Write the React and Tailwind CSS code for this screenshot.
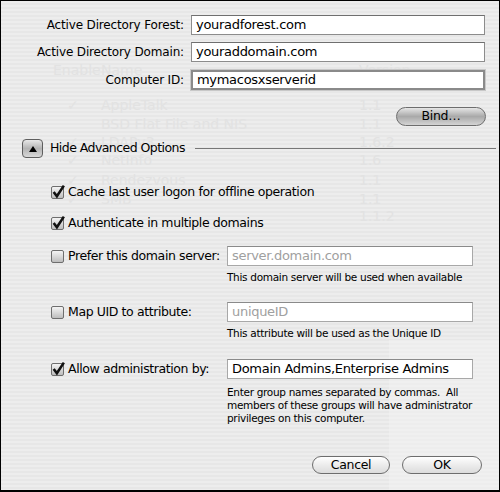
import React from 'react';

const font = { fontFamily: '"DejaVu Sans", "Liberation Sans", sans-serif' };

const ghostRows = [
  { name: 'AppleTalk', ver: '1.1', y: 'top-[94px]', on: true },
  { name: 'BSD Flat File and NIS', ver: '1.1', y: 'top-[113px]', on: false },
  { name: 'LDAPv3', ver: '1.6.2', y: 'top-[131px]', on: true },
  { name: 'NetInfo', ver: '1.6', y: 'top-[149px]', on: true },
  { name: 'Rendezvous', ver: '1.1', y: 'top-[169px]', on: true },
  { name: 'SMB', ver: '1.1', y: 'top-[188px]', on: true },
  { name: '', ver: '1.1.2', y: 'top-[205px]', on: false },
];

// faded list from the pane behind the sheet
const Ghost = () => (
  <div className="absolute inset-0 pointer-events-none text-[14px] text-[#e2e2e2]">
    <div className="absolute left-[52px] top-[59px]">Enable</div>
    <div className="absolute left-[100px] top-[59px]">Name</div>
    <div className="absolute left-[358px] top-[59px]">Version</div>
    {ghostRows.map((r, i) => (
      <React.Fragment key={i}>
        {r.on && <div className={`absolute left-[66px] ${r.y}`}>✓</div>}
        <div className={`absolute left-[100px] ${r.y}`}>{r.name}</div>
        <div className={`absolute left-[358px] ${r.y}`}>{r.ver}</div>
      </React.Fragment>
    ))}
  </div>
);

const TextRow = ({ label, value, focused }) => (
  <div className="flex items-center h-[20px]">
    <div className="w-[183px] text-right text-[12px] tracking-[-0.15px] text-black whitespace-nowrap">{label}</div>
    <div
      className={`ml-[7px] w-[294px] h-[20px] bg-white flex items-center pl-[4px] text-[13px] tracking-[-0.3px] text-black ${
        focused
          ? 'border-2 border-[#8a8a8a] shadow-[0_0_0_1px_#c8c8c8]'
          : 'border border-[#8c8c8c] border-t-[#6f6f6f]'
      }`}
    >
      {value}
    </div>
  </div>
);

const Check = ({ checked }) => (
  <span className="w-[13px] h-[13px] rounded-[2px] border border-[#6e6e6e] bg-gradient-to-b from-[#f4f4f4] via-[#d9d9d9] to-[#bdbdbd] relative shrink-0">
    {checked && (
      <svg viewBox="0 0 14 14" className="absolute -left-[1px] -top-[3px] w-[15px] h-[15px]">
        <path d="M2.5 7.5 L5.5 11.5 L12 1.5" fill="none" stroke="#111" strokeWidth="2.4" />
      </svg>
    )}
  </span>
);

const Field = ({ value, placeholder }) => (
  <div className="w-[246px] h-[20px] bg-white border border-[#a8a8a8] border-t-[#8a8a8a] flex items-center pl-[4px] text-[13px] tracking-[-0.3px]">
    {value ? <span className="text-black">{value}</span> : <span className="text-[#a0a0a0]">{placeholder}</span>}
  </div>
);

const Pill = ({ children, dark, className }) => (
  <div
    className={`h-[18px] rounded-full border border-[#6d6d6d] flex items-center justify-center text-[12.5px] tracking-[-0.3px] text-black ${
      dark
        ? 'bg-gradient-to-b from-[#e6e6e6] via-[#a9a9a9] to-[#d4d4d4]'
        : 'bg-gradient-to-b from-[#ffffff] via-[#ececec] to-[#dcdcdc]'
    } ${className}`}
  >
    {children}
  </div>
);

const Hint = ({ children, className }) => (
  <div className={`pl-[176px] text-[10.5px] tracking-[-0.3px] leading-[13px] ${className}`}>{children}</div>
);

export default function App() {
  return (
    <div style={font} className="w-[500px] h-[492px] relative border border-b-2 border-black overflow-hidden bg-[repeating-linear-gradient(to_bottom,#ededed_0px,#ededed_2px,#e7e7e7_2px,#e7e7e7_4px)]">
      <div className="absolute right-0 bottom-0 w-[110px] h-[150px] bg-[#f3f3f3]/50 pointer-events-none" />
      <Ghost />
      <div className="relative">
        <div className="pt-[14px] flex flex-col gap-[7px]">
          <TextRow label="Active Directory Forest:" value="youradforest.com" />
          <TextRow label="Active Directory Domain:" value="youraddomain.com" />
          <div className="mt-[1px]">
            <TextRow label="Computer ID:" value="mymacosxserverid" focused />
          </div>
        </div>

        <div className="flex justify-end pr-[13px] mt-[17px]">
          <Pill dark className="w-[90px] h-[19px]">Bind…</Pill>
        </div>

        <div className="flex items-center mt-[13px] pl-[21px]">
          <div className="w-[21px] h-[19px] rounded-[4px] border border-[#5e5e5e] bg-gradient-to-b from-[#e8e8e8] via-[#b4b4b4] to-[#d8d8d8] flex items-center justify-center">
            <svg viewBox="0 0 8 6" className="w-[8px] h-[6px]">
              <path d="M0 6 L4 0 L8 6 Z" fill="#000" />
            </svg>
          </div>
          <span className="ml-[7px] text-[12.5px] tracking-[-0.55px] text-black">Hide Advanced Options</span>
          <div className="flex-1 ml-[10px] mr-[3px] h-px bg-[#777]" />
        </div>

        <div className="pl-[50px] mt-[26px] flex flex-col text-[12.5px] tracking-[-0.4px] text-black whitespace-nowrap">
          <div className="flex items-center h-[16px] gap-[4px]">
            <Check checked />
            <span>Cache last user logon for offline operation</span>
          </div>
          <div className="flex items-center h-[16px] gap-[4px] mt-[15px]">
            <Check checked />
            <span>Authenticate in multiple domains</span>
          </div>

          <div className="flex items-center h-[20px] mt-[15px]">
            <div className="flex items-center gap-[4px] w-[176px]">
              <Check />
              <span>Prefer this domain server:</span>
            </div>
            <Field placeholder="server.domain.com" />
          </div>
          <Hint className="mt-[5px]">This domain server will be used when available</Hint>

          <div className="flex items-center h-[20px] mt-[18px]">
            <div className="flex items-center gap-[4px] w-[176px]">
              <Check />
              <span>Map UID to attribute:</span>
            </div>
            <Field placeholder="uniqueID" />
          </div>
          <Hint className="mt-[5px]">This attribute will be used as the Unique ID</Hint>

          <div className="flex items-center h-[20px] mt-[19px]">
            <div className="flex items-center gap-[4px] w-[176px]">
              <Check checked />
              <span>Allow administration by:</span>
            </div>
            <Field value="Domain Admins,Enterprise Admins" />
          </div>
          <Hint className="mt-[7px]">
            <div>Enter group names separated by commas.&nbsp; All</div>
            <div>members of these groups will have administrator</div>
            <div>privileges on this computer.</div>
          </Hint>
        </div>

        <div className="flex justify-end gap-[12px] pr-[17px] mt-[31px]">
          <Pill className="w-[78px]">Cancel</Pill>
          <Pill className="w-[80px]">OK</Pill>
        </div>
      </div>
    </div>
  );
}
